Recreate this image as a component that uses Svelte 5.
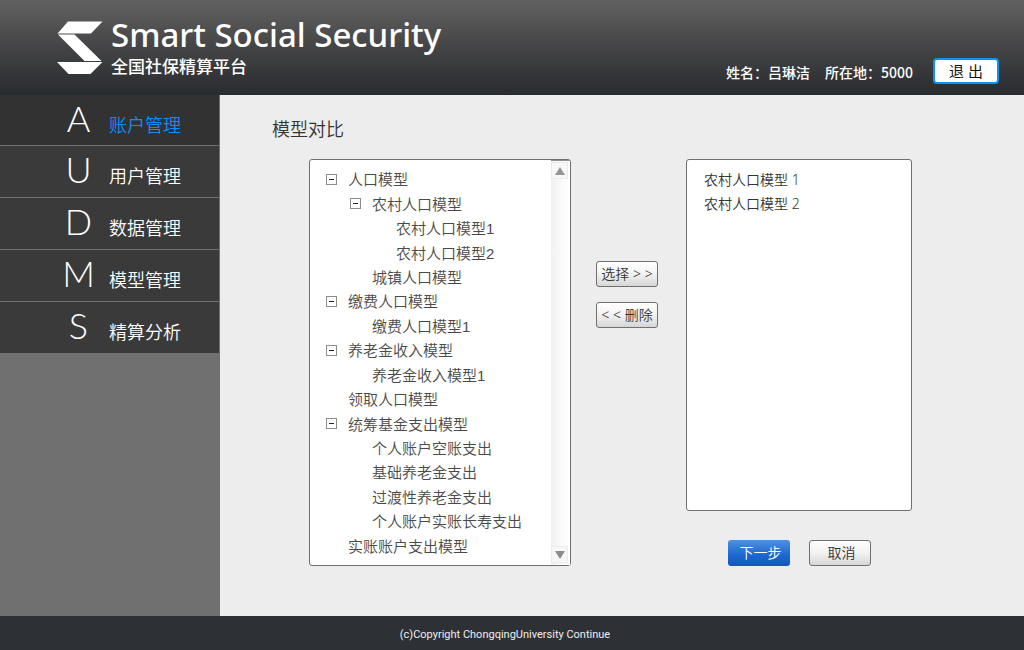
<script>
  const menu = [
    { letter: 'A', label: '账户管理' },
    { letter: 'U', label: '用户管理' },
    { letter: 'D', label: '数据管理' },
    { letter: 'M', label: '模型管理' },
    { letter: 'S', label: '精算分析' }
  ];
  let current = $state(0);

  const nodes = [
    { text: '人口模型', level: 0, parent: true },
    { text: '农村人口模型', level: 1, parent: true },
    { text: '农村人口模型1', level: 2 },
    { text: '农村人口模型2', level: 2 },
    { text: '城镇人口模型', level: 1 },
    { text: '缴费人口模型', level: 0, parent: true },
    { text: '缴费人口模型1', level: 1 },
    { text: '养老金收入模型', level: 0, parent: true },
    { text: '养老金收入模型1', level: 1 },
    { text: '领取人口模型', level: 0 },
    { text: '统筹基金支出模型', level: 0, parent: true },
    { text: '个人账户空账支出', level: 1 },
    { text: '基础养老金支出', level: 1 },
    { text: '过渡性养老金支出', level: 1 },
    { text: '个人账户实账长寿支出', level: 1 },
    { text: '实账账户支出模型', level: 0 }
  ];
  const chosen = ['农村人口模型 1', '农村人口模型 2'];
</script>

<div class="page">
  <header>
    <div class="brand">
      <svg class="logo" width="46" height="54" viewBox="0 0 46 54" aria-hidden="true">
        <g fill="#fff">
          <path d="M11 0.5H45.500L34 12.500H0.500Z" />
          <path d="M1 13.500H17.500L44.500 40H27.500Z" />
          <path d="M0 41H45.500L33.500 53H11.500Z" />
        </g>
      </svg>
      <div class="names">
        <h1>Smart Social Security</h1>
        <p>全国社保精算平台</p>
      </div>
    </div>
    <div class="account">
      <span>姓名：吕琳洁</span>
      <span>所在地：5000</span>
      <button class="logout" type="button">退 出</button>
    </div>
  </header>

  <div class="body">
    <nav>
      <ul>
        {#each menu as item, i}
          <li>
            <a href="#{item.letter}" class:active={i === current} onclick={() => (current = i)}>
              <span class="letter">{item.letter}</span>
              <span class="label">{item.label}</span>
            </a>
          </li>
        {/each}
      </ul>
    </nav>

    <main>
      <h2>模型对比</h2>
      <div class="transfer">
        <div class="box source">
          <ul class="tree">
            {#each nodes as node}
              <li class="level{node.level}">
                {#if node.parent}
                  <button class="toggle" type="button" aria-label={node.text}></button>
                {:else}
                  <span class="blank"></span>
                {/if}
                <span class="name">{node.text}</span>
              </li>
            {/each}
          </ul>
          <div class="scroll">
            <button type="button" aria-label="向上">
              <svg width="10" height="8" viewBox="0 0 10 8"><path d="M5 0L10 8H0Z" fill="#969696" /></svg>
            </button>
            <button type="button" aria-label="向下">
              <svg width="10" height="8" viewBox="0 0 10 8"><path d="M5 8L10 0H0Z" fill="#8c8c8c" /></svg>
            </button>
          </div>
        </div>

        <div class="moves">
          <button class="btn" type="button">选择 &gt; &gt;</button>
          <button class="btn" type="button">&lt; &lt; 删除</button>
        </div>

        <div class="target">
          <ul class="box chosen">
            {#each chosen as name}
              <li>{name}</li>
            {/each}
          </ul>
          <div class="actions">
            <button class="btn primary" type="button">下一步</button>
            <button class="btn" type="button">取消</button>
          </div>
        </div>
      </div>
    </main>
  </div>

  <footer>(c)Copyright ChongqingUniversity Continue</footer>
</div>

<style>
  :global(body) {
    margin: 0;
  }
  .page,
  button {
    font-family: 'Noto Sans', 'Noto Sans CJK SC', sans-serif;
  }
  .page {
    display: flex;
    flex-direction: column;
    min-height: 100vh;
  }
  ul,
  h1,
  h2,
  p {
    margin: 0;
    padding: 0;
    list-style: none;
  }
  button {
    box-sizing: border-box;
    padding: 0;
    white-space: nowrap;
  }
  header {
    display: flex;
    justify-content: space-between;
    box-sizing: border-box;
    height: 95px;
    padding: 0 25px 0 57px;
    background: linear-gradient(#626262, #444446 50%, #282b2f);
    color: #fff;
  }
  .brand {
    display: flex;
    gap: 8px;
  }
  .logo {
    margin-top: 21px;
  }
  h1 {
    margin-top: 14px;
    font-size: 33px;
    font-weight: 500;
    line-height: 42px;
    white-space: nowrap;
  }
  .names p {
    font-family: 'Noto Sans CJK SC', sans-serif;
    font-size: 17px;
    font-weight: 500;
    line-height: 20px;
  }
  .account {
    display: flex;
    align-items: center;
    align-self: flex-end;
    gap: 15px;
    margin-bottom: 11px;
    font-size: 14px;
    font-weight: 500;
    line-height: 24px;
    white-space: nowrap;
  }
  .account span {
    padding-top: 2px;
    font-family: 'Noto Sans CJK SC', sans-serif;
  }
  .logout {
    width: 66px;
    height: 26px;
    margin-left: 5px;
    border: 2px solid #0a94f0;
    border-radius: 4px;
    background: #fff;
    color: #111;
    font-size: 15px;
    line-height: 20px;
  }
  .body {
    display: flex;
    flex: 1;
  }
  nav {
    box-sizing: border-box;
    width: 220px;
    flex: none;
    border-right: 1px solid #707070;
    background: #707070;
  }
  nav a {
    display: flex;
    align-items: center;
    gap: 12px;
    height: 51px;
    padding-left: 60px;
    border-bottom: 1px solid #707070;
    background: #3a3a3a;
    color: #fff;
    text-decoration: none;
  }
  nav li:first-child a {
    height: 50px;
  }
  nav a.active {
    background: #323232;
  }
  nav a.active .label {
    color: #0a90ff;
  }
  .letter {
    width: 37px;
    padding-bottom: 5px;
    font-family: Lato, Inter, sans-serif;
    font-size: 36px;
    font-weight: 300;
    line-height: 44px;
    text-align: center;
  }
  .label {
    padding-top: 9px;
    font-size: 18px;
    font-weight: 350;
    line-height: 24px;
  }
  main {
    flex: 1;
    min-width: 0;
    padding: 22px 112px 50px 52px;
    background: #ededed;
  }
  h2 {
    color: #333;
    font-size: 18px;
    font-weight: 350;
    line-height: 24px;
  }
  .transfer {
    display: grid;
    grid-template-columns: 262fr 65px 226fr;
    column-gap: 25px;
    margin: 18px 0 0 37px;
  }
  .box {
    border: 1px solid #707070;
    border-radius: 3px;
    background: #fff;
  }
  .source {
    display: flex;
    justify-content: space-between;
  }
  .tree {
    display: flex;
    flex-direction: column;
    min-height: 391px;
    padding: 7px 0 7px 16px;
    color: #4a4a4a;
    font-family: 'Liberation Sans', 'Noto Sans CJK SC', sans-serif;
    font-size: 15px;
    font-weight: 350;
    line-height: 22px;
    white-space: nowrap;
  }
  .tree li {
    display: flex;
    flex: 1;
    align-items: center;
    gap: 11px;
  }
  .name {
    padding-top: 2px;
  }
  .level1 {
    padding-left: 24px;
  }
  .level2 {
    padding-left: 48px;
  }
  .toggle,
  .blank {
    width: 11px;
    height: 11px;
    flex: none;
  }
  .toggle {
    border: 1px solid #8c8c8c;
    background: linear-gradient(#222, #222) center / 5px 1px no-repeat #fff;
  }
  .scroll {
    display: flex;
    flex-direction: column;
    justify-content: space-between;
    width: 19px;
    padding: 1px 0 2px;
    border-top: 1px solid #909090;
    background: linear-gradient(90deg, #f1f1f1, #fafafa 60%, #fff);
  }
  .scroll button {
    display: flex;
    align-items: center;
    justify-content: center;
    width: 17px;
    height: 17px;
    border: 1px solid #ebebeb;
    background: #f7f7f7;
  }
  .moves {
    display: flex;
    flex-direction: column;
    gap: 15px;
    padding-top: 102px;
  }
  .btn {
    width: 62px;
    height: 26px;
    border: 1px solid #707070;
    border-radius: 3px;
    background: linear-gradient(#fff, #f2f2f2 50%, #d6d6d6);
    color: #333;
    font-size: 14px;
    font-weight: 350;
    line-height: 22px;
  }
  .chosen {
    min-height: 342px;
    padding: 8px 0 0 17px;
    color: #333;
    font-size: 14px;
    font-weight: 350;
    line-height: 24px;
  }
  .actions {
    display: flex;
    gap: 19px;
    padding: 29px 0 0 42px;
  }
  .actions .btn {
    padding-left: 3px;
  }
  .primary {
    border-color: transparent;
    background: linear-gradient(#5090e0, #1c66d0 60%, #1458b8) border-box;
    color: #fff;
  }
  footer {
    padding: 4px 14px 0 0;
    background: #2d3035;
    color: #eee;
    font-family: Roboto, 'Noto Sans', sans-serif;
    font-size: 11px;
    line-height: 30px;
    text-align: center;
  }
</style>
